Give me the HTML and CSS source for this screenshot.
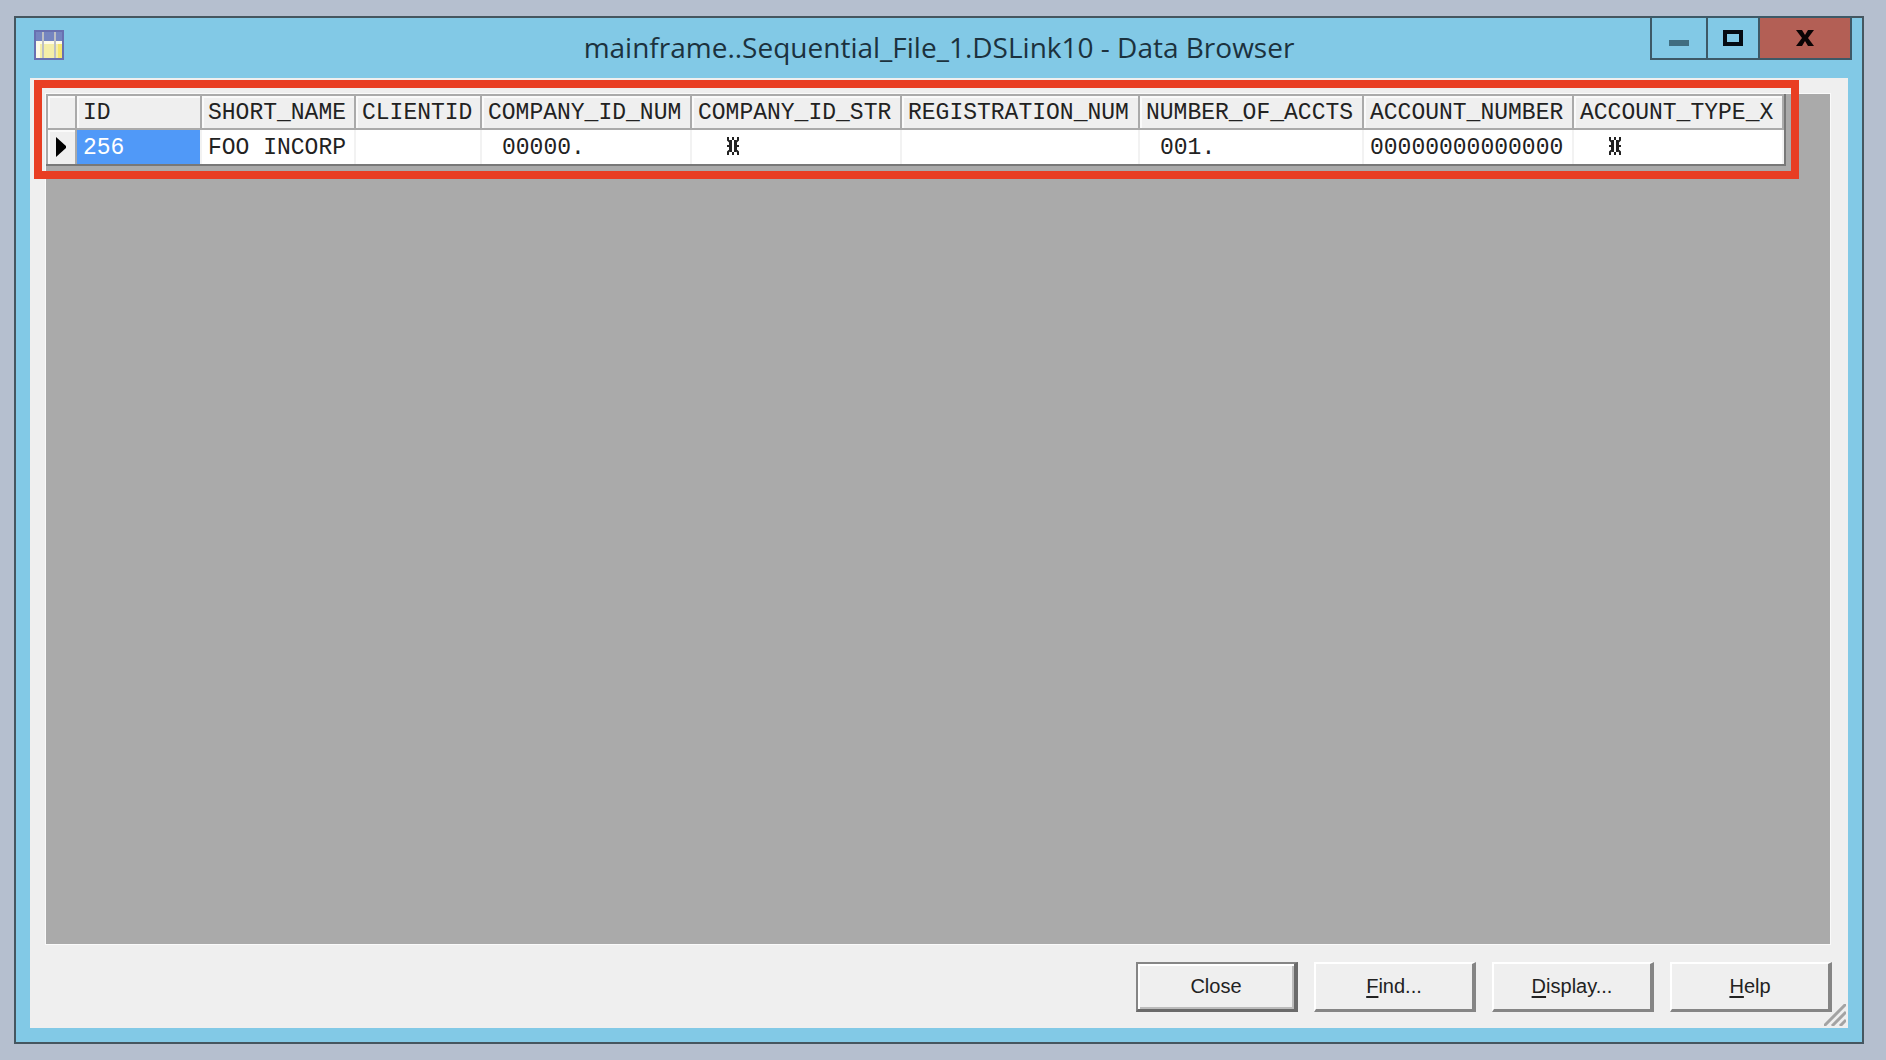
FILE: index.html
```html
<!DOCTYPE html>
<html lang="en">
<head>
<meta charset="utf-8">
<title>mainframe..Sequential_File_1.DSLink10 - Data Browser</title>
<link rel="stylesheet" href="styles.css">
</head>
<body>
<main class="window">
  <header class="titlebar">
    <svg class="app-icon" viewBox="0 0 30 30" aria-hidden="true">
      <rect width="30" height="30" fill="#6870b0"/>
      <rect x="2" y="2" width="26" height="9" fill="#7585c0"/>
      <rect x="2" y="11" width="26" height="17" fill="#f4eea8"/>
      <path d="M2 11h26v3H6v14H2z" fill="#fdfbe8"/>
      <path d="M24 14h4v14h-4z" fill="#f5e56e"/>
      <path d="M9 2v26M21 2v26" stroke="#bdbfc4" stroke-width="2"/>
    </svg>
    <h1 class="title">mainframe..Sequential_File_1.DSLink10 - Data Browser</h1>
    <div class="controls">
      <button class="control minimize" type="button" aria-label="Minimize">
        <svg width="20" height="16" viewBox="0 0 20 16"><path d="M0 10h20v6H0z" fill="#406d80"/></svg>
      </button>
      <button class="control maximize" type="button" aria-label="Maximize">
        <svg width="20" height="16" viewBox="0 0 20 16"><path d="M2 2h16v12H2z" fill="none" stroke="#050b12" stroke-width="4"/></svg>
      </button>
      <button class="control close" type="button" aria-label="Close window">
        <svg width="18" height="16" viewBox="0 0 18 16"><path d="M0 0h6l3 5 3-5h6l-6 8 6 8h-6l-3-5-3 5H0l6-8z" fill="#0b0405"/></svg>
      </button>
    </div>
  </header>
  <div class="client">
    <section class="grid-area">
      <table class="grid">
        <colgroup>
          <col class="w-mark"><col class="w-id"><col class="w-name"><col class="w-client"><col class="w-medium"><col class="w-medium"><col class="w-registration"><col class="w-accounts"><col class="w-medium"><col class="w-medium">
        </colgroup>
        <thead>
          <tr>
            <th></th><th scope="col">ID</th><th scope="col">SHORT_NAME</th><th scope="col">CLIENTID</th><th scope="col">COMPANY_ID_NUM</th><th scope="col">COMPANY_ID_STR</th><th scope="col">REGISTRATION_NUM</th><th scope="col">NUMBER_OF_ACCTS</th><th scope="col">ACCOUNT_NUMBER</th><th scope="col">ACCOUNT_TYPE_X</th>
          </tr>
        </thead>
        <tbody>
          <tr>
            <th class="marker"><svg width="10" height="20" viewBox="0 0 10 20" aria-hidden="true"><path d="M0 0l10 9v2L0 20z" fill="#000"/></svg></th>
            <td class="selected">256</td>
            <td>FOO INCORP</td>
            <td></td>
            <td class="indent">00000.</td>
            <td class="symbol"><svg width="12" height="18" viewBox="0 0 12 18" aria-hidden="true"><path d="M1 0v3l2 2v8l-2 2v3M11 0v3L9 5v8l2 2v3M6 0v3M6 15v3M4 3v12M8 3v12M0 9h3M9 9h3" fill="none" stroke="#222" stroke-width="2"/></svg></td>
            <td></td>
            <td class="indent">001.</td>
            <td>00000000000000</td>
            <td class="symbol"><svg width="12" height="18" viewBox="0 0 12 18" aria-hidden="true"><path d="M1 0v3l2 2v8l-2 2v3M11 0v3L9 5v8l2 2v3M6 0v3M6 15v3M4 3v12M8 3v12M0 9h3M9 9h3" fill="none" stroke="#222" stroke-width="2"/></svg></td>
          </tr>
        </tbody>
      </table>
      <div class="highlight"></div>
    </section>
    <footer class="actions">
      <button class="action default" type="button">Close</button>
      <button class="action" type="button"><u>F</u>ind...</button>
      <button class="action" type="button"><u>D</u>isplay...</button>
      <button class="action" type="button"><u>H</u>elp</button>
    </footer>
    <svg class="grip" viewBox="0 0 22 22" aria-hidden="true"><path d="M0 22L22 0M8 22L22 8M16 22l6-6" stroke="#a3a3a3" stroke-width="3"/></svg>
  </div>
</main>
</body>
</html>
```
FILE: styles.css
```css
* { box-sizing: border-box; }

body {
  margin: 0;
  min-height: 100vh;
  display: flex;
  padding: 16px 22px 16px 14px;
  background: #b5bfcf;
  color: #222;
  font-family: "Liberation Sans", Arial, sans-serif;
}

.window {
  flex: 1;
  min-width: 0;
  display: flex;
  flex-direction: column;
  padding: 0 14px 14px;
  border: 2px solid #455660;
  background: #82c9e6;
}

.titlebar {
  height: 60px;
  display: grid;
  grid-template-columns: 1fr auto 1fr;
  align-items: start;
}

.app-icon {
  width: 30px;
  height: 30px;
  margin: 12px 0 0 4px;
}

.title {
  margin: 11px 0 0;
  color: #1c323e;
  font: 28px/36px "Open Sans", "Noto Sans", sans-serif;
  white-space: nowrap;
}

.controls {
  display: flex;
  justify-self: end;
  margin: -2px -4px 0 0;
  border: 2px solid #3d5967;
}

.control {
  display: flex;
  align-items: center;
  justify-content: center;
  width: 52px;
  height: 40px;
  padding: 0;
  border: 0;
  background: #82c9e6;
}

.control + .control { border-left: 2px solid #3d5967; }

.minimize { width: 54px; }

.close {
  width: 92px;
  background: #b35f55;
}

.client {
  position: relative;
  flex: 1;
  display: flex;
  flex-direction: column;
  gap: 18px;
  padding: 16px;
  background: #efefef;
}

.grid-area {
  position: relative;
  flex: 1;
  margin-right: 2px;
  background: #aaa;
  box-shadow: 0 0 0 1px #fafafa;
}

.grid {
  width: 1739px;
  table-layout: fixed;
  border-collapse: separate;
  border-spacing: 0;
  border: solid #787878;
  border-width: 0 2px 2px 0;
  background: #fff;
  font: 23px/30px "Liberation Mono", "Courier New", monospace;
  text-align: left;
  white-space: pre;
}

.grid th,
.grid td {
  height: 34px;
  padding: 2px 0 0 6px;
  font-weight: normal;
}

.grid th {
  height: 36px;
  border: solid #aaa;
  border-width: 2px 2px 2px 0;
  background: #efefef;
  box-shadow: inset 2px 2px #fafafa;
}

.grid td { border-right: 2px solid #f2f2f2; }

.grid th:first-child { border-left: 2px solid #aaa; }

.grid .marker {
  height: 34px;
  padding: 0 0 0 8px;
  border-width: 0 2px 0 0;
}

.marker svg,
.symbol svg {
  display: block;
}

.grid .selected {
  background: #5099f8;
  color: #fff;
}

.grid .indent { padding-left: 20px; }

.grid .symbol { padding: 0 0 2px 35px; }

.w-mark { width: 31px; }
.w-id { width: 125px; }
.w-name { width: 154px; }
.w-client { width: 126px; }
.w-medium { width: 210px; }
.w-registration { width: 238px; }
.w-accounts { width: 224px; }

/* Red callout around the record */
.highlight {
  position: absolute;
  top: -14px;
  left: -12px;
  width: 1765px;
  height: 99px;
  border: 8px solid #e93e23;
}

.actions {
  display: flex;
  justify-content: flex-end;
  gap: 16px;
}

.action {
  width: 162px;
  height: 50px;
  padding: 0 0 2px;
  border: solid;
  border-width: 2px 4px 3px 2px;
  border-color: #fff #858585 #858585 #fff;
  background: #efefef;
  color: #222;
  font: 20px/24px "Liberation Sans", Arial, sans-serif;
}

.action u {
  text-decoration-thickness: 2px;
  text-underline-offset: 3px;
}

.default {
  border-color: #858585 #6a6a6a #6a6a6a #858585;
  box-shadow: inset 2px 2px #fff, inset -2px -2px #bbb;
}

.grip {
  position: absolute;
  right: 2px;
  bottom: 2px;
  width: 22px;
  height: 22px;
}
```
